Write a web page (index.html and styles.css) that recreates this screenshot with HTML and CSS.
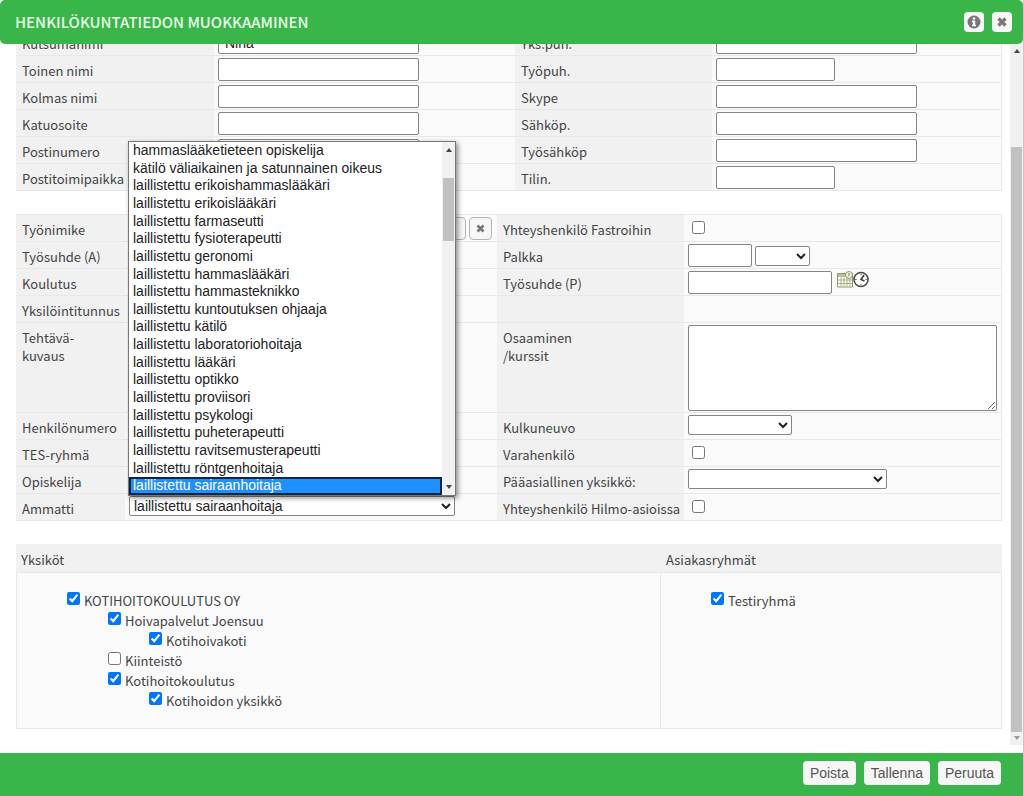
FILE: index.html
```html
<!DOCTYPE html>
<html lang="fi">
<head>
<meta charset="utf-8">
<title>Henkilökuntatiedon muokkaaminen</title>
<link rel="stylesheet" href="styles.css">
</head>
<body>
<div class="dialog">
  <header class="titlebar">
    <h1 class="title">HENKILÖKUNTATIEDON MUOKKAAMINEN</h1>
    <button class="tool" type="button" aria-label="Ohje">
      <svg width="14" height="14" viewBox="0 0 14 14"><circle cx="7" cy="7" r="6.5" fill="#777"/><path d="M5.8 2.5h2.4v2H5.8zM5 5.6h3.2v4.2H9v1.4H5V9.800h.8V7H5z" fill="#fff"/></svg>
    </button>
    <button class="tool" type="button" aria-label="Sulje">
      <svg width="12" height="12" viewBox="0 0 12 12"><path d="M2.500 2.500l7 7M9.500 2.500l-7 7" stroke="#777" stroke-width="3.200"/></svg>
    </button>
  </header>

  <main class="viewport">
    <form class="content" id="staff">
      <section class="grid contact">
        <label class="name" for="f1">Kutsumanimi</label><div class="cell"><input class="text w-l" id="f1" value="Nina"></div>
        <label class="name" for="f2">Yks.puh.</label><div class="cell last"><input class="text w-l" id="f2"></div>
        <label class="name" for="f3">Toinen nimi</label><div class="cell"><input class="text w-l" id="f3"></div>
        <label class="name" for="f4">Työpuh.</label><div class="cell last"><input class="text w-m" id="f4"></div>
        <label class="name" for="f5">Kolmas nimi</label><div class="cell"><input class="text w-l" id="f5"></div>
        <label class="name" for="f6">Skype</label><div class="cell last"><input class="text w-l" id="f6"></div>
        <label class="name" for="f7">Katuosoite</label><div class="cell"><input class="text w-l" id="f7"></div>
        <label class="name" for="f8">Sähköp.</label><div class="cell last"><input class="text w-l" id="f8"></div>
        <label class="name" for="f9">Postinumero</label><div class="cell"><input class="text w-l" id="f9"></div>
        <label class="name" for="f10">Työsähköp</label><div class="cell last"><input class="text w-l" id="f10"></div>
        <label class="name" for="f11">Postitoimipaikka</label><div class="cell"><input class="text w-l" id="f11"></div>
        <label class="name" for="f12">Tilin.</label><div class="cell last"><input class="text w-m" id="f12"></div>
      </section>

      <section class="grid work">
        <label class="name" for="w1">Työnimike</label>
        <div class="cell"><input class="text w-xl" id="w1"><button class="mini" type="button" aria-label="Valitse"></button><button class="mini" type="button" aria-label="Tyhjennä"><svg width="9" height="9" viewBox="0 0 9 9"><path d="M1.500 1.500l6 6M7.500 1.500l-6 6" stroke="#777" stroke-width="2.600"/></svg></button></div>
        <label class="name" for="w2">Yhteyshenkilö Fastroihin</label><div class="cell last"><input class="check" type="checkbox" id="w2"></div>

        <label class="name" for="w3">Työsuhde (A)</label><div class="cell"><input class="text w-l" id="w3"></div>
        <label class="name" for="w4">Palkka</label><div class="cell last"><input class="text w-s" id="w4"><select class="pick unit" aria-label="Palkan yksikkö"><option></option></select></div>

        <label class="name" for="w5">Koulutus</label><div class="cell"><input class="text w-l" id="w5"></div>
        <label class="name" for="w6">Työsuhde (P)</label>
        <div class="cell last"><input class="text w-date" id="w6"><span class="icons">
          <svg width="16" height="17" viewBox="0 0 16 17"><path d="M.5 2.500h15v13.500H.5z" fill="#fffef4" stroke="#8f9868"/><path d="M1 3h14v3H1z" fill="#b9c092"/><path d="M1 9h14M1 12.500h14M4 6.500v9M7 6.500v9M10 6.500v9M13 6.500v9" stroke="#a9b184" stroke-width="1"/><circle cx="12" cy="4" r="3.500" fill="#f3f5e0" stroke="#8f9868"/><path d="M12 2v2.500l-1 1" fill="none" stroke="#6f7850"/></svg><svg width="16" height="17" viewBox="0 0 16 17"><circle cx="8" cy="8.500" r="7" fill="#fff" stroke="#4c4c4c" stroke-width="1.600"/><path d="M11 4L8 8.500l3.500 1.500" fill="none" stroke="#3c3c3c" stroke-width="1.600"/><path d="M8 2.800v1.400M8 12.800v1.400M2.300 8.500h1.400M12.500 8.500h1.200" stroke="#555"/></svg></span></div>

        <label class="name" for="w7">Yksilöintitunnus</label><div class="cell"><input class="text w-l" id="w7"></div>
        <span class="name"></span><div class="cell last"></div>

        <label class="name" for="w8">Tehtävä-<br>kuvaus</label><div class="cell"><textarea class="area" id="w8"></textarea></div>
        <label class="name" for="w9">Osaaminen<br>/kurssit</label><div class="cell last"><textarea class="area" id="w9"></textarea></div>

        <label class="name" for="w10">Henkilönumero</label><div class="cell"><input class="text w-l" id="w10"></div>
        <label class="name" for="w11">Kulkuneuvo</label><div class="cell last"><select class="pick vehicle" id="w11"><option></option></select></div>

        <label class="name" for="w12">TES-ryhmä</label><div class="cell"><input class="text w-l" id="w12"></div>
        <label class="name" for="w13">Varahenkilö</label><div class="cell last"><input class="check" type="checkbox" id="w13"></div>

        <label class="name" for="w14">Opiskelija</label><div class="cell"><input class="check" type="checkbox" id="w14"></div>
        <label class="name" for="w15">Pääasiallinen yksikkö:</label><div class="cell last"><select class="pick main-unit" id="w15"><option></option></select></div>

        <label class="name" for="w16">Ammatti</label>
        <div class="cell"><div class="combo">
          <select class="pick profession" id="w16"><option>laillistettu sairaanhoitaja</option></select>
          <div class="popup">
            <ul class="options" role="listbox" aria-label="Ammatti">
              <li role="option">hammaslääketieteen opiskelija</li>
              <li role="option">kätilö väliaikainen ja satunnainen oikeus</li>
              <li role="option">laillistettu erikoishammaslääkäri</li>
              <li role="option">laillistettu erikoislääkäri</li>
              <li role="option">laillistettu farmaseutti</li>
              <li role="option">laillistettu fysioterapeutti</li>
              <li role="option">laillistettu geronomi</li>
              <li role="option">laillistettu hammaslääkäri</li>
              <li role="option">laillistettu hammasteknikko</li>
              <li role="option">laillistettu kuntoutuksen ohjaaja</li>
              <li role="option">laillistettu kätilö</li>
              <li role="option">laillistettu laboratoriohoitaja</li>
              <li role="option">laillistettu lääkäri</li>
              <li role="option">laillistettu optikko</li>
              <li role="option">laillistettu proviisori</li>
              <li role="option">laillistettu psykologi</li>
              <li role="option">laillistettu puheterapeutti</li>
              <li role="option">laillistettu ravitsemusterapeutti</li>
              <li role="option">laillistettu röntgenhoitaja</li>
              <li role="option" class="active" aria-selected="true">laillistettu sairaanhoitaja</li>
            </ul>
            <div class="bar list-bar"><span class="arrow up"></span><span class="thumb"></span><span class="arrow down"></span></div>
          </div>
        </div></div>
        <label class="name" for="w17">Yhteyshenkilö Hilmo-asioissa</label><div class="cell last"><input class="check" type="checkbox" id="w17"></div>
      </section>

      <section class="groups">
        <h2 class="head">Yksiköt</h2>
        <h2 class="head">Asiakasryhmät</h2>
        <div class="tree">
          <label class="node"><input type="checkbox" checked>KOTIHOITOKOULUTUS OY</label>
          <div class="branch">
            <label class="node"><input type="checkbox" checked>Hoivapalvelut Joensuu</label>
            <div class="branch"><label class="node"><input type="checkbox" checked>Kotihoivakoti</label></div>
            <label class="node"><input type="checkbox">Kiinteistö</label>
            <label class="node"><input type="checkbox" checked>Kotihoitokoulutus</label>
            <div class="branch"><label class="node"><input type="checkbox" checked>Kotihoidon yksikkö</label></div>
          </div>
        </div>
        <div class="tree">
          <label class="node"><input type="checkbox" checked>Testiryhmä</label>
        </div>
      </section>
    </form>
    <div class="bar page-bar"><span class="arrow up"></span><span class="thumb"></span><span class="arrow down pale"></span></div>
  </main>

  <footer class="actions">
    <button class="action" type="button">Poista</button>
    <button class="action" type="submit" form="staff">Tallenna</button>
    <button class="action" type="button">Peruuta</button>
  </footer>
</div>
</body>
</html>
```
FILE: styles.css
```css
* { box-sizing: border-box; }

body {
  margin: 0;
  background: #fff;
  color: #444;
  font: 13px/18px "Noto Sans CJK SC", "Open Sans", sans-serif;
}

.dialog {
  display: flex;
  flex-direction: column;
  height: 100vh;
  border-right: 1px solid #c8c8c8;
}

.titlebar {
  display: flex;
  align-items: center;
  gap: 8px;
  height: 44px;
  padding: 0 11px 0 15px;
  background: #3ab54a;
  border-radius: 5px;
  flex: none;
}

.title {
  flex: 1;
  margin: 0;
  color: #e6ffe6;
  font-size: 15px;
  font-weight: 500;
}

.tool {
  display: grid;
  place-items: center;
  width: 20px;
  height: 20px;
  padding: 0;
  border: 0;
  border-radius: 4px;
  background: #f6f6f6;
}

.viewport {
  display: flex;
  flex: 1;
  min-height: 0;
  overflow: hidden;
}

.content {
  display: flex;
  flex-direction: column;
  flex: 1;
  gap: 23px;
  margin-top: -16px;
  padding: 0 8px 0 16px;
}

.grid {
  display: grid;
  border-top: 1px solid #e8e8e8;
}

.contact { grid-template-columns: 198fr 301fr 197fr 290fr; }
.work { grid-template-columns: 109fr 372fr 187fr 318fr; }

.name {
  min-width: 0;
  padding: 6px 0 2px 6px;
  background: #f1f1f1;
  border-bottom: 1px solid #e8e8e8;
  white-space: nowrap;
}

.cell {
  display: flex;
  align-items: flex-start;
  gap: 3px;
  min-width: 0;
  min-height: 27px;
  padding: 2px 4px 1px;
  background: #fafafa;
  border-bottom: 1px solid #e8e8e8;
}

.cell.last { border-right: 1px solid #e8e8e8; }

.text,
.area,
.pick {
  border: 1px solid #858585;
  border-radius: 2px;
  background: #fff;
  color: #222;
  font: 14px/18px "Liberation Sans", Arial, sans-serif;
}

.text { height: 23px; padding: 0 6px; }
.w-s { width: 64px; }
.w-m { width: 119px; }
.w-date { width: 144px; }
.w-l { width: 201px; }
.w-xl { width: 311px; }

.area { width: 309px; height: 86px; }

.pick { height: 20px; padding: 0; }
.unit { width: 55px; margin-top: 2px; }
.vehicle { width: 104px; }
.main-unit { width: 199px; }
.profession { width: 100%; }

.check { width: 13px; height: 13px; margin: 4px; }

.icons { display: flex; margin-left: 2px; }

.mini {
  display: grid;
  place-items: center;
  width: 23px;
  height: 23px;
  padding: 0;
  border: 1px solid #b5b5b5;
  border-radius: 4px;
  background: #f6f6f6;
}

.combo { position: relative; width: 326px; }

.popup {
  position: absolute;
  bottom: 100%;
  left: -1px;
  z-index: 2;
  display: flex;
  width: 328px;
  border: 1px solid #777;
  background: #fff;
  box-shadow: 2px 2px 5px rgba(0, 0, 0, .45);
}

.options {
  display: grid;
  grid-auto-rows: 1fr;
  flex: 1;
  height: 353px;
  margin: 0;
  padding: 0;
  list-style: none;
  color: #222;
  font: 14px/16px "Liberation Sans", Arial, sans-serif;
}

.options li { padding-left: 4px; white-space: nowrap; }

.options .active {
  padding-left: 2px;
  border: 2px solid #10243c;
  background: #1e90ff;
  color: #fff;
  line-height: 13px;
}

.bar {
  display: flex;
  flex-direction: column;
  align-items: center;
  background: #f1f1f1;
}

.thumb { width: 11px; background: #c1c1c1; }

.arrow {
  border: 3px solid transparent;
  border-top-width: 0;
  border-bottom: 4px solid #444;
}

.arrow.down {
  border-top: 4px solid #444;
  border-bottom-width: 0;
  margin-top: auto;
}

.arrow.pale { border-top-color: #999; }

.list-bar { width: 13px; padding: 6px 0; }
.list-bar .thumb { height: 63px; margin-top: 26px; }

.page-bar { width: 13px; margin-bottom: 8px; padding: 5px 0; }
.page-bar .thumb { flex: 1; margin: 94px 0 4px; }

.groups {
  display: grid;
  grid-template-columns: 645fr 341fr;
}

.head {
  margin: 0;
  padding: 7px 5px 3px;
  background: #f1f1f1;
  font-size: 13px;
  font-weight: 400;
}

.tree {
  padding: 17px 50px 18px;
  border: 1px solid #e8e8e8;
  border-left-width: 0;
  background: #fafafa;
}

.tree:nth-of-type(1) { border-left-width: 1px; }

.node {
  display: flex;
  gap: 4px;
  padding-top: 2px;
}

.node input { width: 13px; height: 13px; margin: 0; }

.branch { padding-left: 41px; }

.actions {
  display: flex;
  justify-content: flex-end;
  align-items: flex-start;
  gap: 8px;
  height: 43px;
  padding: 8px 22px 0 0;
  background: #3ab54a;
  flex: none;
}

.action {
  height: 24px;
  padding: 0 7px;
  border: 0;
  border-radius: 4px;
  background: #f6f6f6;
  color: #555;
  font: 14px/20px "Liberation Sans", Arial, sans-serif;
}
```
